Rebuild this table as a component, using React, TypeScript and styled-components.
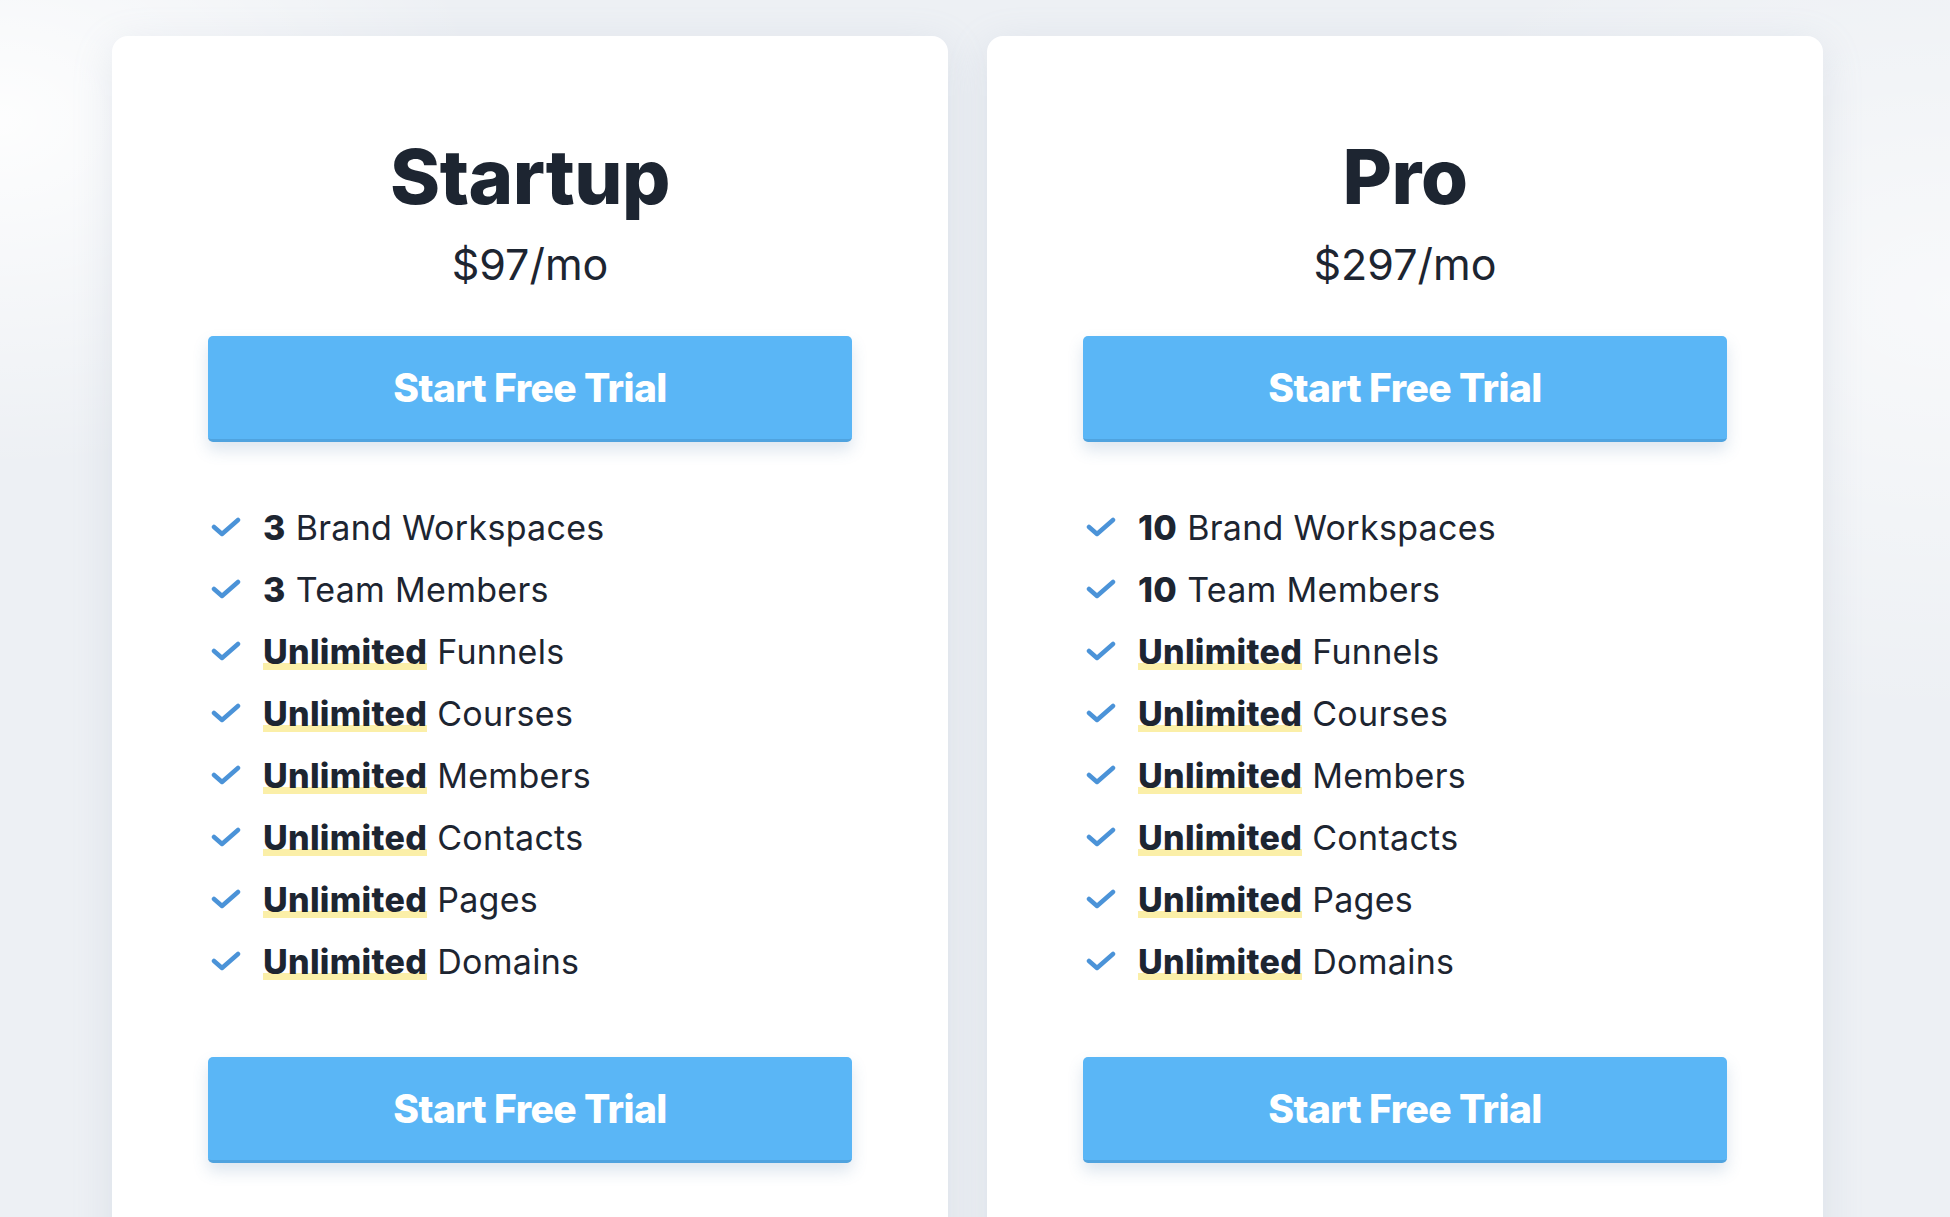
import { FunctionComponent } from 'react';
import styled, { createGlobalStyle } from 'styled-components';

const GlobalStyle = createGlobalStyle`
    html, body {
        margin: 0;
        padding: 0;
    }
    body {
        background: #eef1f5;
        font-family: Inter, "Noto Sans", "Liberation Sans", sans-serif;
        overflow: hidden;
    }
`;

const Page = styled.div`
    min-height: 1217px;
    height: 1217px;
    overflow: hidden;
    background:
        radial-gradient(ellipse 700px 500px at 0px 120px, rgba(255, 255, 255, 0.9), rgba(255, 255, 255, 0) 70%),
        radial-gradient(ellipse 900px 600px at 1950px 300px, rgba(255, 255, 255, 0.6), rgba(255, 255, 255, 0) 70%),
        #edf0f4;
    display: flex;
    gap: 39px;
    padding: 36px 0 0 112px;
    box-sizing: border-box;
`;

const Card = styled.section`
    width: 836px;
    flex-shrink: 0;
    height: 1240px;
    background: #ffffff;
    border-radius: 16px;
    box-shadow: 0 10px 40px rgba(150, 165, 190, 0.2);
    padding: 102px 96px 0;
    box-sizing: border-box;
    display: flex;
    flex-direction: column;
    align-items: stretch;
`;

const Title = styled.h2`
    margin: 0;
    text-align: center;
    font-size: 76px;
    line-height: 76px;
    font-weight: 800;
    color: #1d2531;
    letter-spacing: -0.5px;
`;

const Price = styled.div`
    margin-top: 25px;
    text-align: center;
    font-size: 43px;
    line-height: 50px;
    font-weight: 400;
    color: #1d2531;
`;

const TrialButton = styled.button<{ $top: number }>`
    margin-top: ${(p) => p.$top}px;
    height: 106px;
    width: 100%;
    border: none;
    border-radius: 5px;
    background: #5ab6f6;
    border-bottom: 3px solid #4fa3df;
    box-shadow: 0 8px 16px rgba(60, 110, 160, 0.18);
    color: #ffffff;
    font-family: Inter, "Noto Sans", "Liberation Sans", sans-serif;
    font-size: 39px;
    font-weight: 800;
    letter-spacing: -0.6px;
    cursor: pointer;
`;

const Features = styled.ul`
    list-style: none;
    margin: 54px 0 0;
    padding: 0 0 0 3px;
`;

const Feature = styled.li`
    display: flex;
    align-items: center;
    height: 62px;
    font-size: 34px;
    color: #1d2531;
    letter-spacing: 0.3px;
`;

const Check = styled.svg`
    width: 30px;
    height: 22px;
    margin-right: 22px;
    flex-shrink: 0;
`;

const Strong = styled.b<{ $mark?: boolean }>`
    font-weight: 800;
    letter-spacing: 0.3px;
    margin-right: 10px;
    background: ${(p) =>
        p.$mark
            ? 'linear-gradient(to bottom, transparent 78%, #fbefa8 78%, #fbefa8 96%, transparent 96%)'
            : 'none'};
`;

type Plan = {
    name: string;
    price: string;
    count: string;
};

const plans: Plan[] = [
    { name: 'Startup', price: '$97/mo', count: '3' },
    { name: 'Pro', price: '$297/mo', count: '10' },
];

const unlimited = ['Funnels', 'Courses', 'Members', 'Contacts', 'Pages', 'Domains'];

const CheckIcon: FunctionComponent = () => (
    <Check viewBox="0 0 30 22">
        <polyline
            points="3,11 11,18 27,4"
            fill="none"
            stroke="#4b93d8"
            strokeWidth="4.5"
            strokeLinecap="round"
            strokeLinejoin="round"
        />
    </Check>
);

const PlanCard: FunctionComponent<{ plan: Plan }> = ({ plan }) => (
    <Card>
        <Title>{plan.name}</Title>
        <Price>{plan.price}</Price>
        <TrialButton $top={47}>Start Free Trial</TrialButton>
        <Features>
            <Feature>
                <CheckIcon />
                <Strong>{plan.count}</Strong>Brand Workspaces
            </Feature>
            <Feature>
                <CheckIcon />
                <Strong>{plan.count}</Strong>Team Members
            </Feature>
            {unlimited.map((item) => (
                <Feature key={item}>
                    <CheckIcon />
                    <Strong $mark>Unlimited</Strong>
                    {item}
                </Feature>
            ))}
        </Features>
        <TrialButton $top={65}>Start Free Trial</TrialButton>
    </Card>
);

const App: FunctionComponent = () => (
    <>
        <GlobalStyle />
        <Page>
            {plans.map((plan) => (
                <PlanCard key={plan.name} plan={plan} />
            ))}
        </Page>
    </>
);

export default App;
